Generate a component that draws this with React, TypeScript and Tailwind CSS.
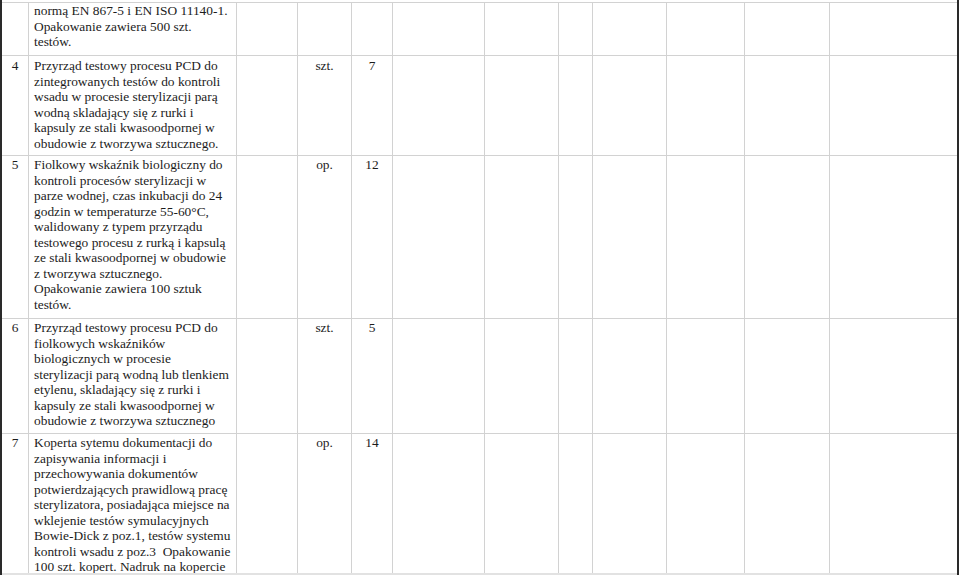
const rows: {
  no?: string;
  lines: string[];
  unit?: string;
  qty?: string;
  h: string;
  pt: string;
  last?: boolean;
}[] = [
  {
    lines: ["normą EN 867-5 i EN ISO 11140-1.", "Opakowanie zawiera 500 szt.", "testów."],
    h: "h-[53px]",
    pt: "pt-0",
  },
  {
    no: "4",
    lines: [
      "Przyrząd testowy procesu PCD do",
      "zintegrowanych testów do kontroli",
      "wsadu w procesie sterylizacji parą",
      "wodną skladający się z rurki i",
      "kapsuly ze stali kwasoodpornej w",
      "obudowie z tworzywa sztucznego.",
    ],
    unit: "szt.",
    qty: "7",
    h: "h-[100px]",
    pt: "pt-[2px]",
  },
  {
    no: "5",
    lines: [
      "Fiolkowy wskaźnik biologiczny do",
      "kontroli procesów sterylizacji w",
      "parze wodnej, czas inkubacji do 24",
      "godzin w temperaturze 55-60°C,",
      "walidowany z typem przyrządu",
      "testowego procesu z rurką i kapsulą",
      "ze stali kwasoodpornej w obudowie",
      "z tworzywa sztucznego.",
      "Opakowanie zawiera 100 sztuk",
      "testów.",
    ],
    unit: "op.",
    qty: "12",
    h: "h-[163px]",
    pt: "pt-[1px]",
  },
  {
    no: "6",
    lines: [
      "Przyrząd testowy procesu PCD do",
      "fiolkowych wskaźników",
      "biologicznych w procesie",
      "sterylizacji parą wodną lub tlenkiem",
      "etylenu, skladający się z rurki i",
      "kapsuly ze stali kwasoodpornej w",
      "obudowie z tworzywa sztucznego",
    ],
    unit: "szt.",
    qty: "5",
    h: "h-[115px]",
    pt: "pt-[1px]",
  },
  {
    no: "7",
    lines: [
      "Koperta sytemu dokumentacji do",
      "zapisywania informacji i",
      "przechowywania dokumentów",
      "potwierdzających prawidlową pracę",
      "sterylizatora, posiadająca miejsce na",
      "wklejenie testów symulacyjnych",
      "Bowie-Dick z poz.1, testów systemu",
      "kontroli wsadu z poz.3\u00a0 Opakowanie",
      "100 szt. kopert. Nadruk na kopercie",
    ],
    unit: "op.",
    qty: "14",
    h: "h-[141px]",
    pt: "pt-[1px]",
    last: true,
  },
];

// widths of the empty trailing columns
const emptyCols = [
  "w-[92px]",
  "w-[74px]",
  "w-[34px]",
  "w-[74px]",
  "w-[78px]",
  "w-[85px]",
];

export default function App() {
  return (
    <div className="h-[575px] w-[960px] overflow-hidden bg-white font-['Liberation_Serif',serif] text-[13.4px] leading-[15.5px] text-[#1c1c1c]">
      <div className="h-[575px] w-[959px] border-x-2 border-[#2a2a2a] pt-[2px]">
        <div className="flex flex-col border-t border-[#d2d2d2]">
          {rows.map((r, i) => (
            <div
              key={i}
              className={
                r.last
                  ? `flex shrink-0 overflow-hidden border-b-2 border-[#e2e2e2] ${r.h}`
                  : `flex shrink-0 overflow-hidden border-b border-[#d2d2d2] ${r.h}`
              }
            >
              <div className={`w-[27px] shrink-0 border-r border-[#d2d2d2] text-center ${r.pt}`}>
                {r.no}
              </div>
              <div className={`w-[208px] shrink-0 border-r border-[#d2d2d2] pl-[5px] ${r.pt}`}>
                {r.lines.map((l, j) => (
                  <div key={j} className="whitespace-nowrap">
                    {l}
                  </div>
                ))}
              </div>
              <div className="w-[61px] shrink-0 border-r border-[#d2d2d2]" />
              <div className={`w-[54px] shrink-0 border-r border-[#d2d2d2] text-center ${r.pt}`}>
                {r.unit}
              </div>
              <div className={`w-[41px] shrink-0 border-r border-[#d2d2d2] text-center ${r.pt}`}>
                {r.qty}
              </div>
              {emptyCols.map((w, k) => (
                <div key={k} className={`${w} shrink-0 border-r border-[#d2d2d2]`} />
              ))}
              <div className="flex-1" />
            </div>
          ))}
        </div>
      </div>
    </div>
  );
}
